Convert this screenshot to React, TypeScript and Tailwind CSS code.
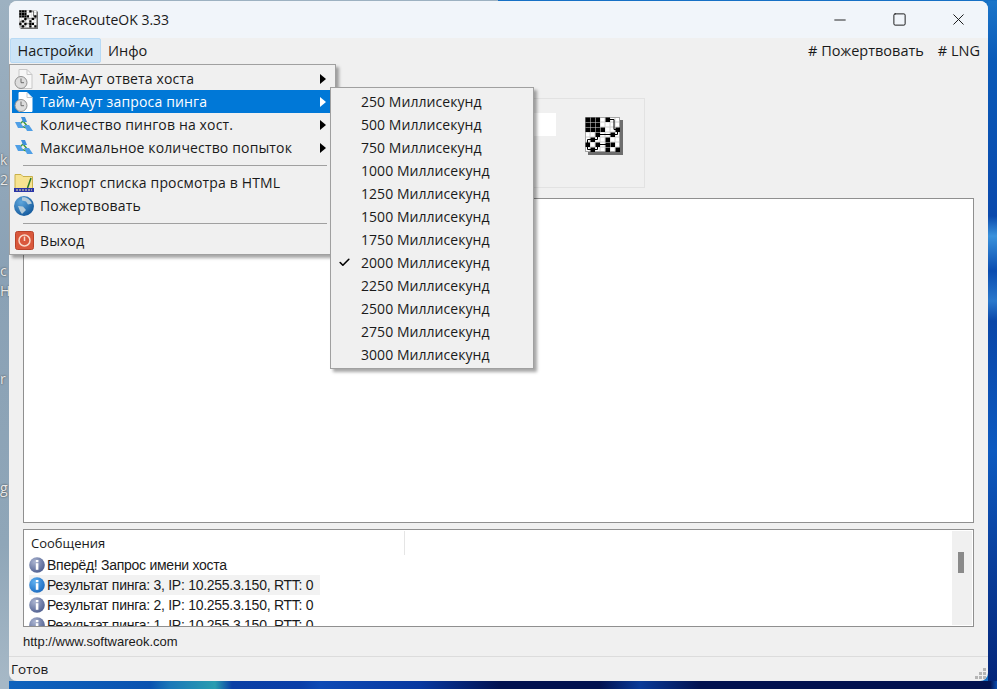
import React from "react";
import { Check, Minus, Square, X } from "lucide-react";

const font = { fontFamily: '"Open Sans", sans-serif' };
const arial = { fontFamily: '"Liberation Sans", sans-serif' };

const timeouts = [
  "250 Миллисекунд",
  "500 Миллисекунд",
  "750 Миллисекунд",
  "1000 Миллисекунд",
  "1250 Миллисекунд",
  "1500 Миллисекунд",
  "1750 Миллисекунд",
  "2000 Миллисекунд",
  "2250 Миллисекунд",
  "2500 Миллисекунд",
  "2750 Миллисекунд",
  "3000 Миллисекунд",
];

const GRID = ["1110100", "1110000", "1111001", "0010010", "0100100", "1010110", "0100101"];

const GridIcon = ({ size }: { size: number }) => {
  return (
    <svg width={size} height={size} viewBox="0 0 38 38" className="shrink-0">
      <rect x="3" y="3" width="35" height="35" fill="#6e6e6e" />
      <rect x="0" y="0" width="35" height="35" fill="#fff" />
      <path d="M5 0v35M10 0v35M15 0v35M20 0v35M25 0v35M30 0v35M0 5h35M0 10h35M0 15h35M0 20h35M0 25h35M0 30h35" stroke="#d0d0d0" strokeWidth="1" />
      <rect x="0.5" y="0.5" width="34" height="34" fill="none" stroke="#a8a8a8" />
      {GRID.map((row, y) =>
        row.split("").map((c, x) =>
          c === "1" ? <rect key={x + "-" + y} x={x * 5 + 0.5} y={y * 5 + 0.5} width="4.5" height="4.5" fill="#000" /> : null
        )
      )}
      <path d="M22.5 2.5H29V12.5H32.5V17.5H12.5V22.5H2.5V32.5H12.5V27.5H22.5" fill="none" stroke="#000" strokeWidth="1" />
    </svg>
  );
};

const ClockDoc = ({ selected }: { selected?: boolean }) => {
  return (
    <svg width="20" height="20" viewBox="0 0 20 20" className="shrink-0">
      <path d="M5 0.5h8l5 5v14H5z" fill={selected ? "#fff" : "#f8f8f8"} stroke={selected ? "#fff" : "#c8c8c8"} />
      <path d="M13 0.5v5h5" fill="none" stroke="#c8c8c8" />
      <circle cx="7" cy="13.5" r="6" fill="#dcdcdc" stroke="#909090" />
      <path d="M7 9.5v4.2h3" fill="none" stroke="#6c6c6c" />
    </svg>
  );
};

const NetIcon = () => {
  return (
    <svg width="20" height="20" viewBox="0 0 20 20" className="shrink-0">
      <path d="M9 6 5 10M9 6l5 6M6 11l7 2" fill="none" stroke="#3f9a3f" strokeWidth="1.4" />
      <path d="M7 2h4l2 5H9z" fill="#3f8fdc" />
      <path d="M1 7h5l4 6H4z" fill="#4f9fe6" />
      <path d="M10 10h5l4 6h-6z" fill="#4f9fe6" />
    </svg>
  );
};

const FolderIcon = () => {
  return (
    <svg width="20" height="20" viewBox="0 0 20 20" className="shrink-0">
      <path d="M1 1.5h6l2 2h9.5v12H1z" fill="#f7e391" stroke="#c9b04a" />
      <path d="m17 5-3.5 10" stroke="#2d7a2d" strokeWidth="1.5" />
      <rect x="0" y="15" width="20" height="4" fill="#2a35a8" />
      <path d="M2 17h16" stroke="#f2e9a0" strokeDasharray="2 1" />
    </svg>
  );
};

const GlobeIcon = () => {
  return (
    <svg width="20" height="20" viewBox="0 0 20 20" className="shrink-0">
      <defs>
        <radialGradient id="globe" cx="35%" cy="30%" r="75%">
          <stop offset="0%" stopColor="#5ea6dc" />
          <stop offset="100%" stopColor="#13599c" />
        </radialGradient>
      </defs>
      <circle cx="10" cy="10" r="10" fill="url(#globe)" />
      <path d="M8 1.5c4-1 8 2 10 6l-4 1-2-3-4-1zM4 10l5 .5 3 3.5-4 4-2-3z" fill="#b4cbd9" />
    </svg>
  );
};

const ExitIcon = () => {
  return (
    <svg width="19" height="19" viewBox="0 0 19 19" className="shrink-0">
      <rect x="0.5" y="0.5" width="18" height="18" rx="2" fill="#d9583c" stroke="#b9432b" />
      <circle cx="9.5" cy="9.5" r="5.5" fill="none" stroke="#f8d8c8" strokeWidth="1.5" />
      <path d="M9.5 5.5v4.5" stroke="#f8d8c8" strokeWidth="1.5" />
    </svg>
  );
};

const InfoIcon = ({ active, id }: { active?: boolean; id: string }) => {
  return (
    <svg width="16" height="16" viewBox="0 0 16 16" className="shrink-0">
      <defs>
        <radialGradient id={id} cx="35%" cy="30%" r="80%">
          <stop offset="0%" stopColor={active ? "#5fb0f0" : "#aab4d0"} />
          <stop offset="100%" stopColor={active ? "#1766bd" : "#4a5a8c"} />
        </radialGradient>
      </defs>
      <circle cx="8" cy="8" r="7.8" fill={"url(#" + id + ")"} />
      <rect x="6.8" y="3" width="2.6" height="2.2" fill="#fff" />
      <rect x="6.8" y="6.2" width="2.6" height="6.6" fill="#fff" />
    </svg>
  );
};

const Arrow = ({ white }: { white?: boolean }) => {
  return (
    <div className={"h-0 w-0 border-y-[5px] border-l-[6px] border-y-transparent " + (white ? "border-l-white" : "border-l-black")} />
  );
};

const MainMenuRow = ({
  icon,
  label,
  arrow,
  selected,
}: {
  icon: React.ReactNode;
  label: string;
  arrow?: boolean;
  selected?: boolean;
}) => {
  return (
    <div className={"flex h-[23px] items-center pl-[2px] pr-[7px] " + (selected ? "bg-[#0078d7] text-white" : "text-[#1a1a1a]")}>
      <div className="flex w-[20px] items-center justify-center">{icon}</div>
      <span className="ml-[6px] flex-1 text-[14px] tracking-[0.15px]">{label}</span>
      {arrow && <Arrow white={selected} />}
    </div>
  );
};

const Message = ({ text, id, active }: { text: string; id: string; active?: boolean }) => {
  return (
    <div className={"flex h-[20px] w-[291px] shrink-0 items-center gap-[2px] " + (active ? "bg-[#f2f2f2]" : "")}>
      <InfoIcon active={active} id={id} />
      <span className="whitespace-nowrap text-[14px] leading-none tracking-[-0.27px] text-[#1a1a1a]" style={arial}>{text}</span>
    </div>
  );
};

const DesktopLabel = ({ top, text }: { top: string; text: string }) => {
  return <span className={"absolute left-0 text-[14px] leading-none text-[#e8e8e8] [text-shadow:0_0_2px_#333] " + top}>{text}</span>;
};

export default function App() {
  return (
    <div className="flex h-[689px] w-[997px] flex-col overflow-hidden bg-[linear-gradient(90deg,#9db1c1_50%,#1670c5_50%)] pt-[1px]" style={font}>
      <div className="flex min-h-0 flex-1">
        {/* desktop on the left */}
        <div className="relative w-[9px] shrink-0 overflow-hidden bg-[linear-gradient(180deg,#9db1c1,#8aa1b5_40%,#8fa6b8_80%,#a6b8c6)]">
          <DesktopLabel top="top-[152px]" text="k" />
          <DesktopLabel top="top-[172px]" text="2" />
          <DesktopLabel top="top-[263px]" text="c" />
          <DesktopLabel top="top-[283px]" text="H" />
          <DesktopLabel top="top-[371px]" text="r" />
          <DesktopLabel top="top-[480px]" text="g" />
        </div>

        <div className="relative flex h-[680px] min-w-0 flex-1 flex-col overflow-hidden rounded-[8px] bg-[#f0f0f0]">
          {/* title bar */}
          <div className="flex h-[37px] shrink-0 items-center bg-[#f1f5fa] pl-[10px]">
            <GridIcon size={19} />
            <span className="ml-[6px] text-[14px] text-[#1a1a1a]">TraceRouteOK 3.33</span>
            <div className="ml-auto flex items-center text-[#111]">
              <div className="flex w-[60px] justify-center"><Minus size={18} strokeWidth={1.2} /></div>
              <div className="flex w-[58px] justify-center"><Square size={15} strokeWidth={1.5} /></div>
              <div className="flex w-[60px] justify-center"><X size={19} strokeWidth={1.2} /></div>
            </div>
          </div>

          {/* menu bar */}
          <div className="flex h-[27px] shrink-0 items-start text-[14.5px] text-[#1a1a1a]">
            <div className="ml-[1px] flex h-[25px] w-[91px] items-center justify-center rounded-[2px] border border-[#b8daf5] bg-[#cce4f7]">Настройки</div>
            <div className="ml-[7px] flex h-[25px] items-center">Инфо</div>
            <div className="ml-auto mr-[8px] flex h-[25px] items-center gap-[14px]">
              <span># Пожертвовать</span>
              <span># LNG</span>
            </div>
          </div>

          {/* client area */}
          <div className="flex min-h-0 flex-1 flex-col px-[14px]">
            <div className="mb-[10px] ml-auto mr-[329px] mt-[33px] flex h-[90px] w-[253px] shrink-0 items-start justify-end gap-[29px] border border-[#e2e2e2] pr-[21px] pt-[14px]">
              <div className="h-[23px] w-[40px] shrink-0 bg-white" />
              <div className="mt-[4px]"><GridIcon size={38} /></div>
            </div>
            <div className="h-[325px] shrink-0 border border-[#8f8f8f] bg-white" />
            <div className="mt-[6px] flex h-[98px] shrink-0 border border-[#8f8f8f] bg-white">
              <div className="min-w-0 flex-1 overflow-hidden">
                <div className="flex h-[25px] items-end">
                  <div className="flex h-[24px] w-[381px] items-center border-r border-[#e5e5e5] pl-[7px] pt-[2px] text-[13px] text-[#1a1a1a]">Сообщения</div>
                </div>
                <div className="pl-[5px]">
                  <Message id="m1" text="Вперёд! Запрос имени хоста" />
                  <Message id="m2" text="Результат пинга: 3, IP: 10.255.3.150, RTT: 0" active />
                  <Message id="m3" text="Результат пинга: 2, IP: 10.255.3.150, RTT: 0" />
                  <Message id="m4" text="Результат пинга: 1, IP: 10.255.3.150, RTT: 0" />
                </div>
              </div>
              <div className="my-[1px] mr-[1px] flex w-[20px] shrink-0 justify-center bg-[#f0f0f0] pr-[2px] pt-[21px]">
                <div className="h-[21px] w-[6px] bg-[#8a8a8a]" />
              </div>
            </div>
            <div className="flex h-[29px] shrink-0 items-center text-[13px] text-[#1a1a1a]" style={arial}>http://www.softwareok.com</div>
          </div>

          {/* status bar */}
          <div className="relative flex h-[25px] shrink-0 items-center border-t border-[#dcdcdc] pl-[2px] text-[13.5px] text-[#1a1a1a]">
            Готов
            <div className="absolute bottom-[2px] right-[2px] grid grid-cols-3 gap-[1px]">
              <span />
              <span />
              <span className="h-[3px] w-[3px] bg-[#b5b5b5]" />
              <span />
              <span className="h-[3px] w-[3px] bg-[#b5b5b5]" />
              <span className="h-[3px] w-[3px] bg-[#b5b5b5]" />
              <span className="h-[3px] w-[3px] bg-[#b5b5b5]" />
              <span className="h-[3px] w-[3px] bg-[#b5b5b5]" />
              <span className="h-[3px] w-[3px] bg-[#b5b5b5]" />
            </div>
          </div>

          {/* settings menu */}
          <div className="absolute left-0 top-[63px] w-[327px] border border-[#a0a0a0] bg-[#f0f0f0] p-[2px] shadow-[3px_3px_3px_rgba(0,0,0,0.35)]">
            <MainMenuRow icon={<ClockDoc />} label="Тайм-Аут ответа хоста" arrow />
            <MainMenuRow icon={<ClockDoc selected />} label="Тайм-Аут запроса пинга" arrow selected />
            <MainMenuRow icon={<NetIcon />} label="Количество пингов на хост." arrow />
            <MainMenuRow icon={<NetIcon />} label="Максимальное количество попыток" arrow />
            <div className="ml-[11px] mr-[6px] flex h-[12px] items-center"><div className="h-px w-full bg-[#a0a0a0]" /></div>
            <MainMenuRow icon={<FolderIcon />} label="Экспорт списка просмотра в HTML" />
            <MainMenuRow icon={<GlobeIcon />} label="Пожертвовать" />
            <div className="ml-[11px] mr-[6px] flex h-[12px] items-center"><div className="h-px w-full bg-[#a0a0a0]" /></div>
            <MainMenuRow icon={<ExitIcon />} label="Выход" />
          </div>

          {/* timeout submenu */}
          <div className="absolute left-[321px] top-[86px] w-[204px] border border-[#a0a0a0] bg-[#f0f0f0] py-[2px] shadow-[3px_3px_3px_rgba(0,0,0,0.35)]">
            {timeouts.map((t) => (
              <div key={t} className="flex h-[23px] items-center text-[14px] tracking-[0.05px] text-[#1a1a1a]">
                <div className="flex w-[30px] justify-end pr-[10px]">
                  {t.startsWith("2000") && <Check size={13} strokeWidth={3} className="text-black" />}
                </div>
                {t}
              </div>
            ))}
          </div>
        </div>

        {/* desktop on the right */}
        <div className="w-[9px] shrink-0 bg-[linear-gradient(180deg,#1b75c9,#0a5ab8_60px,#0a49ac_215px,#3a92dc_235px,#0a4cb0_270px,#2a78cc_300px,#0a46a8_320px,#0d5ac0_450px,#0a3f9c_560px,#04267a_680px)]" />
      </div>

      {/* desktop below the window */}
      <div className="h-[8px] shrink-0 bg-[linear-gradient(90deg,#a6b8c6_9px,#0f63bd_9px,#0a52b0_150px,#1b78b8_170px,#2a9db0_215px,#0b3fa5_232px,#0a3ea8_300px,#0d4ab5_320px,#0838a0_420px,#021250_500px,#021250_600px,#0a3a98_640px,#021250_700px,#021250_990px,#0a4cb0_997px)]" />
    </div>
  );
}
